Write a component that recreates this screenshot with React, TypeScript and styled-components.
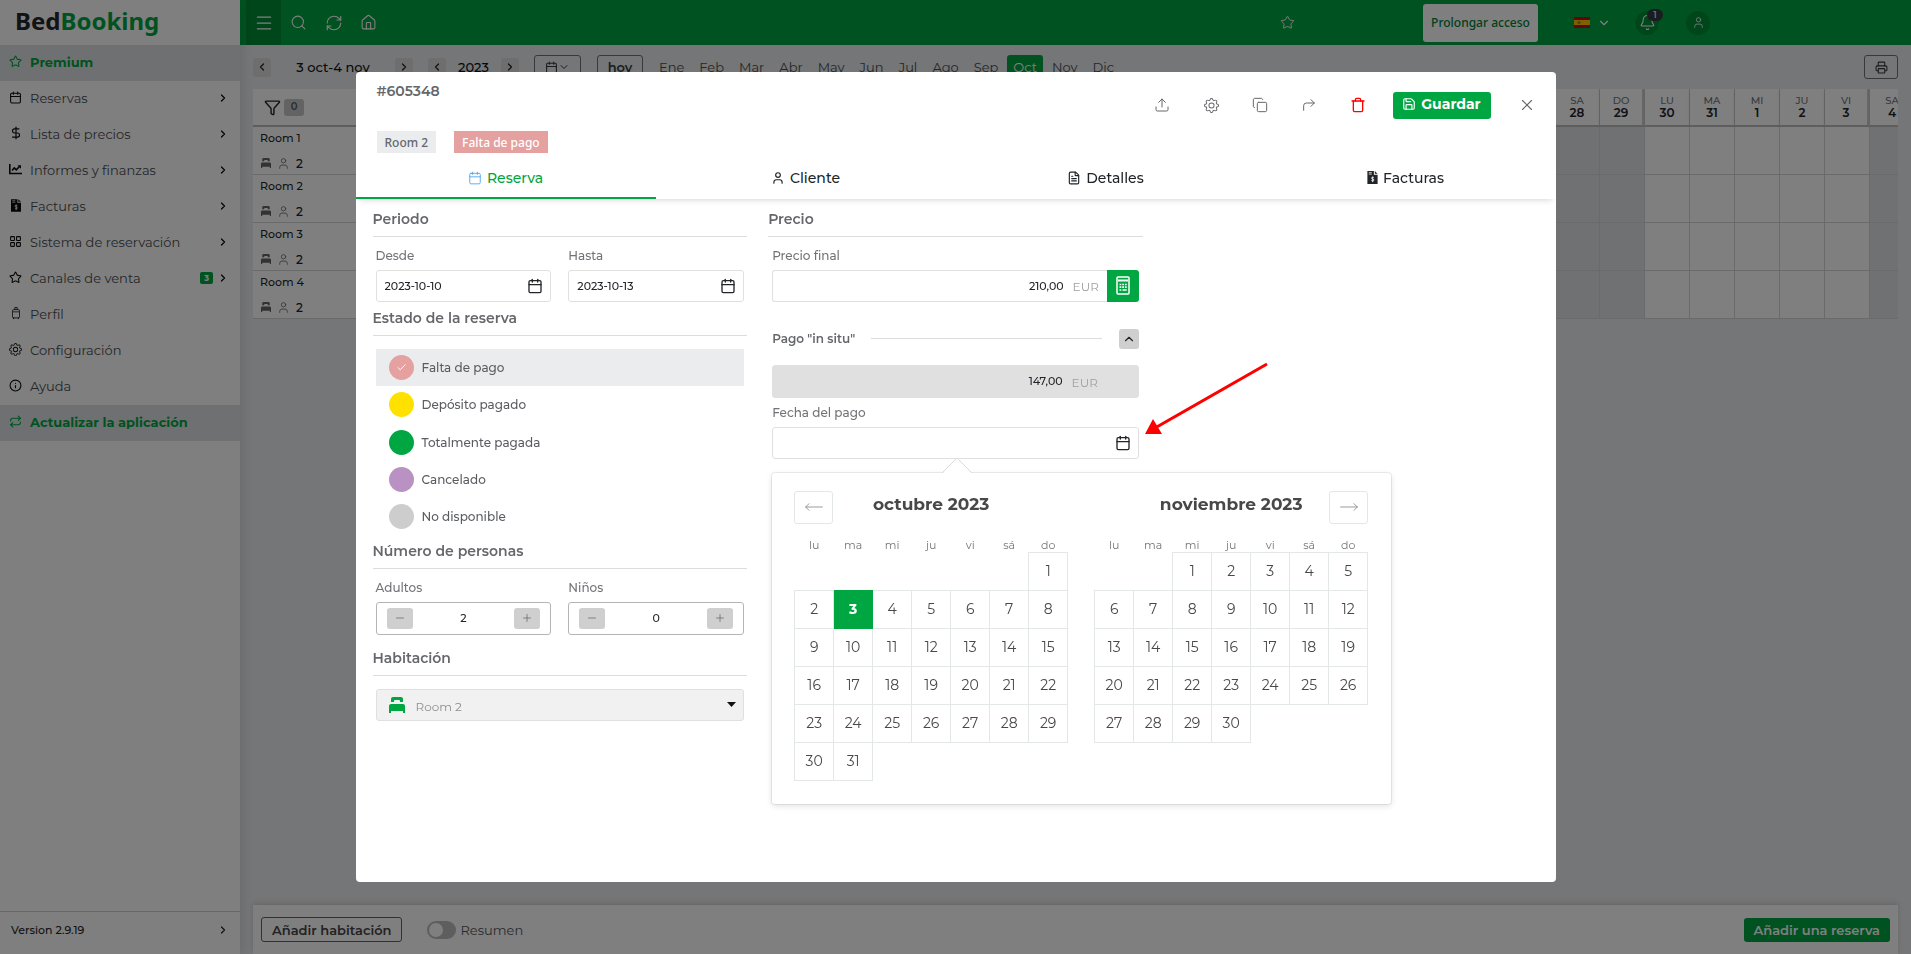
import React from "react";
import styled, { createGlobalStyle, css } from "styled-components";
import {
  Bell, Calendar, ChevronDown, ChevronLeft, ChevronRight, ChevronUp, Copy, CornerUpRight, DollarSign,
  FileText, Funnel, House, Info, LayoutGrid, Menu, Minus, MoveLeft, MoveRight, Plus, Printer, RefreshCw,
  Repeat, Save, Search, Star, Trash, Upload, User, X, Check,
} from "lucide-react";
import { BsGear, BsSuitcase2 } from "react-icons/bs";

const green = "#00a642";
const grey = "#ebecee";
const line = "#e0e0e0";
const sans = `Montserrat, "Open Sans", "Liberation Sans", sans-serif`;
const plain = `"Noto Sans", "Open Sans", sans-serif`;

const Global = createGlobalStyle`
  * { box-sizing: border-box; }
  html, body { margin: 0; height: 100%; }
  body { font-family: ${sans}; font-size: 13px; color: #212529; overflow: hidden; }
  button, input, select { font: inherit; color: inherit; margin: 0; }
  button { padding: 0; border: 0; background: none; cursor: pointer; display: flex; align-items: center; justify-content: center; }
  a { color: inherit; text-decoration: none; }
  svg { flex: none; display: block; }
`;

/* ---------- custom glyphs ---------- */

const BedIcon = ({ w, h, color }: { w: number; h: number; color: string }) => (
  <svg width={w} height={h} viewBox="0 0 16 16" fill={color} aria-hidden>
    <path d="M2 5V2a2 2 0 0 1 2-2h8a2 2 0 0 1 2 2v3h-3V4a1 1 0 0 0-1-1H6a1 1 0 0 0-1 1v1z" />
    <path d="M0 9a2 2 0 0 1 2-2h12a2 2 0 0 1 2 2v7h-2v-2H2v2H0z" />
  </svg>
);

const InvoiceIcon = ({ w, h }: { w: number; h: number }) => (
  <svg width={w} height={h} viewBox="0 0 11 14" aria-hidden>
    <path d="M0 0h7v4h4v10H0z" fill="currentColor" />
    <path d="M8 0l3 3H8z" fill="currentColor" />
    <path d="M1.5 1.8h3.2M1.5 3.4h3.2" stroke="#fff" strokeWidth=".8" />
    <path d="M7 7.2c-.4-.6-2.6-.7-2.6.5 0 1.3 2.7.7 2.7 2 0 1.2-2.3 1.1-2.8.4M5.7 6v6" fill="none" stroke="#fff" strokeWidth=".9" />
  </svg>
);

const ChartIcon = () => (
  <svg width="13" height="11" viewBox="0 0 13 11" fill="none" stroke="currentColor" strokeWidth="1.6" aria-hidden>
    <path d="M.8 0v9.5H13" />
    <path d="M3 6.5l2.3-2.6 2 2 3.4-3.6" />
    <path d="M8.5 1.2H12v3.5z" fill="currentColor" stroke="none" />
  </svg>
);

const CalculatorIcon = () => (
  <svg width="14" height="19" viewBox="0 0 14 19" aria-hidden>
    <rect x="1" y="1" width="12" height="17" rx="1" fill="none" stroke="#fff" strokeWidth="1.5" />
    <path d="M2 4.5h10" stroke="#fff" strokeWidth="2" />
    <path d="M3.5 8.5h7.5M3.5 11.2h7.5" stroke="#fff" strokeWidth="1.7" strokeDasharray="1.8 .9" />
    <path d="M3.5 14h1.8M6.5 14h4.2" stroke="#fff" strokeWidth="1.7" />
  </svg>
);

const Flag = () => (
  <svg width="16" height="11" viewBox="0 0 16 11" aria-hidden>
    <path d="M0 0h16v11H0z" fill="#c60b1e" />
    <path d="M0 3h16v5H0z" fill="#ffc400" />
    <circle cx="5" cy="5.5" r="1.5" fill="#ad7a1a" />
  </svg>
);

/* ---------- shell ---------- */

const Shell = styled.div`display: flex; height: 100vh; background: ${grey};`;

const Sidebar = styled.nav`
  width: 240px; flex: none; display: flex; flex-direction: column; background: #fff;
  box-shadow: 0 0 13px rgba(0, 0, 0, 0.14); z-index: 1;
`;
const Logo = styled.a`
  height: 45px; padding: 0 15px 4px; display: flex; align-items: center;
  font: 700 24px/36px ${plain}; color: #25262b;
  span { color: ${green}; }
`;
const NavItem = styled.a<{ $hot?: boolean }>`
  height: 36px; padding: 0 11px 2px 9px; display: flex; align-items: center; gap: 8px; color: #4c4d50;
  svg { color: #0b0b0b; }
  ${(p) => p.$hot && css`background: #dfe1e5; color: ${green}; font-weight: 700; svg { color: ${green}; }`}
`;
const NavIcon = styled.span`width: 13px; display: flex; justify-content: center; padding-bottom: 2px;`;
const NavLabel = styled.span`flex: 1;`;
const NavBadge = styled.span`
  width: 13px; height: 12px; border-radius: 2px; background: ${green}; color: #fff; margin-right: -4px;
  font: 700 8px/12px ${sans}; text-align: center;
`;
const Version = styled.a`
  margin-top: auto; height: 43px; padding: 0 11px 6px; border-top: 1px solid #cfcfcf; display: flex;
  align-items: center; justify-content: space-between; font-size: 11px; font-weight: 500;
`;

const Main = styled.main`flex: 1; min-width: 0; display: flex; flex-direction: column;`;

const TopBar = styled.header`
  height: 45px; flex: none; padding: 0 201px 0 6px; display: flex; align-items: center; background: ${green}; color: #fff;
`;
const TopButton = styled.button<{ $active?: boolean }>`
  width: 35px; height: 45px; background: ${(p) => (p.$active ? "#008c36" : "none")};
`;
const Spacer = styled.div`flex: 1;`;
const Extend = styled.button`
  width: 115px; height: 38px; margin: 0 36px 0 118px; border-radius: 3px; background: #fff;
  font: 500 12px ${plain}; color: #00803a;
`;
const Lang = styled.button`gap: 7px; margin-right: 24px;`;
const Round = styled.button`position: relative; width: 24px; height: 24px; border-radius: 12px; background: #008c36; margin-right: 27px; &:last-child { margin-right: 0; }`;
const Count = styled.span`
  position: absolute; left: 12px; top: -2px; width: 16px; height: 12px; border-radius: 6px; background: #343a40;
  font: 500 9px/12px ${sans}; text-align: center;
`;

const Toolbar = styled.div`height: 44px; flex: none; padding: 0 13px; display: flex; align-items: center;`;
const Step = styled.button`width: 18px; height: 19px; border-radius: 3px; background: #dcdcdc;`;
const Range = styled.span<{ $w: number }>`width: ${(p) => p.$w}px; text-align: center; color: #111; font-size: 13px; font-weight: 500;`;
const Outlined = styled.button<{ $w: number }>`
  width: ${(p) => p.$w}px; height: 24px; border: 1px solid #6c757d; border-radius: 3px; color: #343a40; font-weight: 600;
`;
const Months = styled.div`display: flex; gap: 3px; margin-left: 10px;`;
const Month = styled.button<{ $on?: boolean }>`
  height: 25px; padding: 0 6px; border-radius: 3px; color: ${(p) => (p.$on ? "#fff" : "#4c4d50")};
  background: ${(p) => (p.$on ? green : "none")};
`;

const Board = styled.div`margin: 0 13px; overflow: hidden; flex: none;`;
const Grid = styled.table`
  border-collapse: separate; border-spacing: 0; table-layout: fixed; width: 1662px;
  th, td { padding: 0; font-weight: 500; }
  thead th { height: 38px; background: #fff; border-bottom: 2px solid #bdbdbd; border-right: 1px solid #cfcfcf; box-shadow: 0 2px 4px rgba(0,0,0,.12); }
  tbody th, tbody td { height: 48px; border-bottom: 1px solid #d3d4d6; }
  tbody th { background: #fff; text-align: left; }
`;
const CornerHead = styled.th`width: 177px;`;
const DayHead = styled.th<{ $edge: boolean }>`
  width: 45px; text-align: center;
  ${(p) => p.$edge && css`border-right: 3px solid #cfd0d2 !important;`}
  small { display: block; font-size: 10px; line-height: 12px; color: #6c757d; }
  b { display: block; font-size: 12px; line-height: 12px; font-weight: 600; }
`;
const DayCell = styled.td<{ $off: boolean }>`background: ${(p) => (p.$off ? "#e0e2e6" : "#fff")}; border-right: 1px solid #d3d4d6;`;
const FilterCell = styled.div`display: flex; align-items: center; gap: 3px; padding-left: 11px;`;
const FilterCount = styled.span`width: 20px; height: 17px; border-radius: 3px; background: #c6c6c6; color: #55595e; font: 600 10px/16px ${sans}; text-align: center;`;
const RoomName = styled.div`padding: 2px 7px 0; font-size: 11px; line-height: 19px;`;
const RoomInfo = styled.div`display: flex; align-items: center; gap: 6px; height: 26px; padding: 4px 8px 0; font-size: 12px; color: #222;`;

const Footer = styled.footer`
  margin: auto 13px 0; height: 49px; padding: 0 8px; display: flex; align-items: center; background: #fff;
  box-shadow: 0 -2px 5px rgba(0, 0, 0, 0.12);
`;
const AddRoom = styled.button`height: 25px; padding: 0 10px; border: 1px solid #5f6368; border-radius: 3px; font-weight: 600; color: #444;`;
const AddBooking = styled.button`height: 24px; padding: 0 10px; border-radius: 3px; background: ${green}; color: #fff; font-weight: 600; margin-left: auto;`;
const Toggle = styled.label`
  display: flex; align-items: center; gap: 4px; margin-left: 25px; color: #55575a;
  input { appearance: none; width: 29px; height: 18px; padding: 2px; border-radius: 9px; background: #bcbcbc; }
  input::before { content: ""; display: block; width: 14px; height: 14px; border-radius: 7px; background: #fff; }
`;

/* ---------- modal ---------- */

const Backdrop = styled.div`
  position: fixed; inset: 0; z-index: 5; background: rgba(0, 0, 0, 0.5); display: flex; align-items: center; justify-content: center;
`;
const Modal = styled.section`
  width: 1200px; max-width: 96vw; height: 85vh; display: flex; flex-direction: column; background: #fff; border-radius: 4px; color: #65676b;
`;
const ModalHead = styled.div`display: flex; justify-content: space-between; height: 59px; padding: 0 17px 0 21px;`;
const Title = styled.h1`margin: 9px 0 0; font-size: 14px; line-height: 20px; font-weight: 600;`;
const Actions = styled.div`display: flex; height: 27px; margin-top: 20px;`;
const Tool = styled.button<{ $red?: boolean }>`width: 49px; color: ${(p) => (p.$red ? "#f00" : "#65676b")};`;
const SaveButton = styled.button`
  gap: 5px; width: 98px; margin: 0 24px 0 10px; padding-bottom: 2px; border-radius: 3px; background: ${green}; color: #fff; font-weight: 700; font-size: 14px;
`;
const Close = styled.button`width: 24px; color: #65676b;`;
const Badges = styled.div`display: flex; gap: 18px; height: 22px; padding: 0 21px; font: 500 12px/24px ${plain};`;
const Tag = styled.span<{ $pink?: boolean }>`
  padding: 0 8px; background: ${(p) => (p.$pink ? "#e5a0a0" : grey)}; color: ${(p) => (p.$pink ? "#fff" : "#65676b")};
`;
const Tabs = styled.div`display: grid; grid-template-columns: repeat(4, 1fr); height: 46px; box-shadow: 0 5px 6px -4px rgba(0, 0, 0, 0.16);`;
const Tab = styled.button<{ $on?: boolean }>`
  gap: 5px; padding-top: 6px; font-size: 14px; font-weight: 500; color: ${(p) => (p.$on ? green : "#212529")};
  border-bottom: 2px solid ${(p) => (p.$on ? green : "transparent")};
`;
const Body = styled.div`flex: 1; display: grid; grid-template-columns: repeat(3, 1fr); column-gap: 21px; align-items: start; padding: 10px 17px 0;`;
const Heading = styled.h2<{ $gap?: number }>`
  margin: ${(p) => p.$gap ?? 0}px 0 0; padding-bottom: 7px; border-bottom: 1px solid #dcdcdc; font-size: 14px; line-height: 20px; font-weight: 600;
`;
const Pair = styled.div`display: grid; grid-template-columns: 1fr 1fr; gap: 17px; margin: 9px 3px 0;`;
const Label = styled.label`display: block; font-size: 12px; line-height: 20px; margin-bottom: 4px; font-weight: 500; color: #717377;`;
const Box = styled.div<{ $dark?: boolean }>`
  display: flex; align-items: center; height: ${(p) => (p.$dark ? 33 : 32)}px; padding: 0 7px 0 8px; border: 1px solid ${(p) => (p.$dark ? "#b5b5b5" : line)};
  border-radius: 3px; color: #212529; font-size: 11px; font-weight: 500;
  input { flex: 1; width: 0; min-width: 0; padding: 0; border: 0; outline: 0; background: none; }
`;
const Statuses = styled.div`display: grid; grid-auto-rows: 1fr; height: 187px; margin: 13px 3px 0;`;
const Status = styled.label<{ $on?: boolean }>`
  display: flex; align-items: center; gap: 8px; padding-left: 13px; font-size: 12px; font-weight: 500; color: #5a5c60;
  background: ${(p) => (p.$on ? grey : "none")};
`;
const Dot = styled.span<{ $c: string }>`
  position: relative; width: 25px; height: 25px; color: #fff;
  input { display: block; appearance: none; width: 25px; height: 25px; border-radius: 50%; background: ${(p) => p.$c}; }
  svg { position: absolute; inset: 7px; }
`;
const Spin = styled.button`width: 26px; height: 21px; border-radius: 3px; background: #cfcfcf; color: #65676b;`;
const Counter = styled(Box)`padding: 0 10px; input { text-align: center; }`;
const SelectBox = styled.div`
  display: flex; align-items: center; height: 32px; margin: 13px 3px 0; padding: 0 7px 0 12px; border: 1px solid ${line}; border-radius: 3px;
  background: #f1f1f1; font-size: 12px;
  select { flex: 1; appearance: none; border: 0; background: none; padding: 3px 11px 0; opacity: 1; color: #8e8e8e; }
`;
const Field = styled.div<{ $top: number }>`position: relative; margin: ${(p) => p.$top}px 4px 0;`;
const PriceRow = styled.div`display: flex; ${Box} { flex: 1; padding-right: 8px; border-right: 0; border-radius: 3px 0 0 3px; } input { text-align: right; }`;
const Unit = styled.span`margin-left: 9px; padding-top: 2px; font-size: 12px; font-weight: 400; color: #a0a0a0;`;
const CalcButton = styled.button`width: 32px; height: 32px; border-radius: 0 3px 3px 0; background: ${green};`;
const OnSite = styled.div`
  display: flex; align-items: center; height: 20px; font-size: 12px; font-weight: 600; color: #65676b;
  hr { flex: 1; margin: 0 17px 0 16px; border: 0; border-top: 1px solid #dcdcdc; }
  button { width: 20px; height: 20px; border-radius: 3px; background: #cfcfcf; color: #212529; }
`;
const Locked = styled(Box)`height: 33px; border-color: #e0e0e0; background: #e0e0e0; padding: 0 40px 0 8px; input { text-align: right; }`;

const Popover = styled.div`
  position: absolute; z-index: 3; top: 70px; left: 0; display: flex; gap: 26px; padding: 18px 23px 23px 22px; background: #fff;
  border-radius: 3px; box-shadow: 0 2px 6px rgba(0, 0, 0, 0.12), 0 0 0 1px rgba(0, 0, 0, 0.07);
`;
const Notch = styled.svg`position: absolute; top: -15px; left: 170px;`;
const Pointer = styled.svg`position: absolute; left: calc(100% + 6px); top: -42px;`;
const MonthHead = styled.div`display: grid; grid-template-columns: 39px 1fr 39px; height: 47px;`;
const MonthTitle = styled.strong`grid-column: 2; font-size: 17px; line-height: 26px; text-align: center; color: #484848;`;
const Arrow = styled.button<{ $col: number }>`grid-column: ${(p) => p.$col}; grid-row: 1; height: 33px; border: 1px solid #e4e7e7; border-radius: 3px; color: #82888a;`;
const Days = styled.table`
  border-collapse: collapse; table-layout: fixed; width: 274px;
  th { padding: 0; height: 14px; font-size: 11px; line-height: 14px; font-weight: 400; color: #757575; }
  td { padding: 0; height: 38px; }
`;
const Day = styled.td<{ $on?: boolean }>`
  border: 1px solid ${(p) => (p.$on ? green : "#e4e7e7")}; background: ${(p) => (p.$on ? green : "none")};
  button { width: 100%; height: 37px; font-size: 14px; font-weight: ${(p) => (p.$on ? 700 : 400)}; color: ${(p) => (p.$on ? "#fff" : "#484848")}; }
`;

/* ---------- data ---------- */

const ic = { size: 13, strokeWidth: 2 };
const menu: { icon: React.ReactNode; text: string; arrow?: boolean; hot?: boolean; badge?: string }[] = [
  { icon: <Star {...ic} />, text: "Premium", hot: true },
  { icon: <Calendar {...ic} />, text: "Reservas", arrow: true },
  { icon: <DollarSign {...ic} size={14} />, text: "Lista de precios", arrow: true },
  { icon: <ChartIcon />, text: "Informes y finanzas", arrow: true },
  { icon: <InvoiceIcon w={10} h={13} />, text: "Facturas", arrow: true },
  { icon: <LayoutGrid {...ic} />, text: "Sistema de reservación", arrow: true },
  { icon: <Star {...ic} />, text: "Canales de venta", arrow: true, badge: "3" },
  { icon: <BsSuitcase2 size={12} />, text: "Perfil" },
  { icon: <BsGear size={13} />, text: "Configuración" },
  { icon: <Info {...ic} />, text: "Ayuda" },
  { icon: <Repeat {...ic} />, text: "Actualizar la aplicación", hot: true },
];
const monthNames = ["Ene", "Feb", "Mar", "Abr", "May", "Jun", "Jul", "Ago", "Sep", "Oct", "Nov", "Dic"];
const weekNames = ["LU", "MA", "MI", "JU", "VI", "SA", "DO"];
const boardDays = Array.from({ length: 33 }, (_, i) => ({ day: i < 29 ? i + 3 : i - 28, week: (i + 1) % 7 }));
const statuses = [
  ["Falta de pago", "#e5a0a0"], ["Depósito pagado", "#ffe100"], ["Totalmente pagada", green], ["Cancelado", "#b991c3"], ["No disponible", "#cdcdcd"],
];

function MonthView({ title, offset, count, selected, dir }: { title: string; offset: number; count: number; selected?: number; dir: "prev" | "next" }) {
  const rows = Array.from({ length: Math.ceil((offset + count) / 7) }, (_, r) => Array.from({ length: 7 }, (_, c) => r * 7 + c - offset + 1));
  return (
    <div>
      <MonthHead>
        <MonthTitle>{title}</MonthTitle>
        <Arrow $col={dir === "prev" ? 1 : 3} aria-label={dir === "prev" ? "Mes anterior" : "Mes siguiente"}>
          {dir === "prev" ? <MoveLeft size={20} strokeWidth={1} /> : <MoveRight size={20} strokeWidth={1} />}
        </Arrow>
      </MonthHead>
      <Days>
        <thead><tr>{["lu", "ma", "mi", "ju", "vi", "sá", "do"].map((d) => <th key={d}>{d}</th>)}</tr></thead>
        <tbody>
          {rows.map((row, r) => (
            <tr key={r}>
              {row.map((d) => (d < 1 || d > count ? <td key={d} /> : <Day key={d} $on={d === selected}><button>{d}</button></Day>))}
            </tr>
          ))}
        </tbody>
      </Days>
    </div>
  );
}

function DateField({ id, label, value }: { id: string; label: string; value: string }) {
  return (
    <div>
      <Label htmlFor={id}>{label}</Label>
      <Box><input id={id} defaultValue={value} /><button aria-label="Abrir calendario"><Calendar size={16} strokeWidth={2} /></button></Box>
    </div>
  );
}

function CounterField({ id, label, value }: { id: string; label: string; value: string }) {
  return (
    <div>
      <Label htmlFor={id}>{label}</Label>
      <Counter $dark>
        <Spin aria-label="Menos"><Minus size={12} strokeWidth={1.5} /></Spin>
        <input id={id} defaultValue={value} />
        <Spin aria-label="Más"><Plus size={12} strokeWidth={1.5} /></Spin>
      </Counter>
    </div>
  );
}

export default function App() {
  return (
    <>
      <Global />
      <Shell>
        <Sidebar>
          <Logo href="#">Bed<span>Booking</span></Logo>
          {menu.map((m) => (
            <NavItem href="#" key={m.text} $hot={m.hot}>
              <NavIcon>{m.icon}</NavIcon>
              <NavLabel>{m.text}</NavLabel>
              {m.badge && <NavBadge>{m.badge}</NavBadge>}
              {m.arrow && <ChevronRight size={12} strokeWidth={2.5} />}
            </NavItem>
          ))}
          <Version href="#">Version 2.9.19<ChevronRight size={12} strokeWidth={2.5} /></Version>
        </Sidebar>

        <Main>
          <TopBar>
            <TopButton $active aria-label="Menú"><Menu size={20} strokeWidth={1.5} /></TopButton>
            <TopButton aria-label="Buscar"><Search size={17} strokeWidth={1.5} /></TopButton>
            <TopButton aria-label="Actualizar"><RefreshCw size={18} strokeWidth={1.5} /></TopButton>
            <TopButton aria-label="Inicio"><House size={17} strokeWidth={1.5} /></TopButton>
            <Spacer />
            <TopButton aria-label="Favoritos"><Star size={15} strokeWidth={1.5} /></TopButton>
            <Extend>Prolongar acceso</Extend>
            <Lang aria-label="Idioma"><Flag /><ChevronDown size={14} /></Lang>
            <Round aria-label="Avisos"><Bell size={17} strokeWidth={1.5} /><Count>1</Count></Round>
            <Round aria-label="Cuenta"><User size={13} strokeWidth={1.5} /></Round>
          </TopBar>

          <Toolbar>
            <Step aria-label="Anterior"><ChevronLeft size={12} strokeWidth={2.5} /></Step>
            <Range $w={124}>3 oct-4 nov</Range>
            <Step aria-label="Siguiente"><ChevronRight size={12} strokeWidth={2.5} /></Step>
            <Range $w={15} />
            <Step aria-label="Año anterior"><ChevronLeft size={12} strokeWidth={2.5} /></Step>
            <Range $w={55}>2023</Range>
            <Step aria-label="Año siguiente"><ChevronRight size={12} strokeWidth={2.5} /></Step>
            <Range $w={15} />
            <Outlined $w={47} aria-label="Elegir fecha"><Calendar size={13} /><ChevronDown size={12} /></Outlined>
            <Range $w={16} />
            <Outlined $w={46}>hoy</Outlined>
            <Months>{monthNames.map((m) => <Month key={m} $on={m === "Oct"}>{m}</Month>)}</Months>
            <Spacer />
            <Outlined $w={34} aria-label="Imprimir"><Printer size={13} /></Outlined>
          </Toolbar>

          <Board>
            <Grid>
              <thead>
                <tr>
                  <CornerHead><FilterCell><Funnel size={17} strokeWidth={2} /><FilterCount>0</FilterCount></FilterCell></CornerHead>
                  {boardDays.map((d) => (
                    <DayHead key={`${d.day}-${d.week}`} $edge={d.week === 6 || d.week === 4}><small>{weekNames[d.week]}</small><b>{d.day}</b></DayHead>
                  ))}
                </tr>
              </thead>
              <tbody>
                {["Room 1", "Room 2", "Room 3", "Room 4"].map((r) => (
                  <tr key={r}>
                    <th>
                      <RoomName>{r}</RoomName>
                      <RoomInfo><BedIcon w={10} h={10} color="#666" /><User size={13} strokeWidth={1.5} color="#666" />2</RoomInfo>
                    </th>
                    {boardDays.map((d) => <DayCell key={`${d.day}-${d.week}`} $off={d.week > 4} />)}
                  </tr>
                ))}
              </tbody>
            </Grid>
          </Board>

          <Footer>
            <AddRoom>Añadir habitación</AddRoom>
            <Toggle><input type="checkbox" />Resumen</Toggle>
            <AddBooking>Añadir una reserva</AddBooking>
          </Footer>
        </Main>
      </Shell>

      <Backdrop>
        <Modal role="dialog" aria-label="Reserva #605348">
          <ModalHead>
            <Title>#605348</Title>
            <Actions>
              <Tool aria-label="Exportar"><Upload size={16} strokeWidth={1.5} /></Tool>
              <Tool aria-label="Ajustes"><BsGear size={15} /></Tool>
              <Tool aria-label="Copiar"><Copy size={16} strokeWidth={1.5} /></Tool>
              <Tool aria-label="Compartir"><CornerUpRight size={16} strokeWidth={1.5} /></Tool>
              <Tool $red aria-label="Eliminar"><Trash size={16} strokeWidth={2} /></Tool>
              <SaveButton><Save size={14} strokeWidth={2} />Guardar</SaveButton>
              <Close aria-label="Cerrar"><X size={18} strokeWidth={1.5} /></Close>
            </Actions>
          </ModalHead>
          <Badges><Tag>Room 2</Tag><Tag $pink>Falta de pago</Tag></Badges>
          <Tabs>
            <Tab $on><Calendar size={14} strokeWidth={1.5} color="#4aa3ee" />Reserva</Tab>
            <Tab><User size={14} />Cliente</Tab>
            <Tab><FileText size={14} />Detalles</Tab>
            <Tab><InvoiceIcon w={11} h={13} />Facturas</Tab>
          </Tabs>

          <Body>
            <div>
              <Heading>Periodo</Heading>
              <Pair>
                <DateField id="from" label="Desde" value="2023-10-10" />
                <DateField id="to" label="Hasta" value="2023-10-13" />
              </Pair>
              <Heading $gap={6}>Estado de la reserva</Heading>
              <Statuses>
                {statuses.map(([name, color], i) => (
                  <Status key={name} $on={i === 0}>
                    <Dot $c={color}><input type="radio" name="status" defaultChecked={i === 0} />{i === 0 && <Check size={11} strokeWidth={2} />}</Dot>
                    {name}
                  </Status>
                ))}
              </Statuses>
              <Heading $gap={5}>Número de personas</Heading>
              <Pair>
                <CounterField id="adults" label="Adultos" value="2" />
                <CounterField id="children" label="Niños" value="0" />
              </Pair>
              <Heading $gap={13}>Habitación</Heading>
              <SelectBox>
                <BedIcon w={16} h={16} color={green} />
                <select aria-label="Habitación" disabled><option>Room 2</option></select>
                <svg width="9" height="5" viewBox="0 0 9 5" aria-hidden><path d="M0 0h9L4.500 5z" fill="#111" /></svg>
              </SelectBox>
            </div>

            <div>
              <Heading>Precio</Heading>
              <Field $top={9}>
                <Label htmlFor="price">Precio final</Label>
                <PriceRow>
                  <Box><input id="price" defaultValue="210,00" /><Unit>EUR</Unit></Box>
                  <CalcButton aria-label="Calcular"><CalculatorIcon /></CalcButton>
                </PriceRow>
              </Field>
              <Field $top={27}>
                <OnSite>Pago "in situ"<hr /><button aria-label="Contraer"><ChevronUp size={14} /></button></OnSite>
              </Field>
              <Field $top={16}>
                <Locked><input aria-label="Pago in situ" readOnly value="147,00" /><Unit>EUR</Unit></Locked>
              </Field>
              <Field $top={5}>
                <DateField id="paid" label="Fecha del pago" value="" />
                <Pointer width="126" height="76" viewBox="0 0 126 76" aria-hidden>
                  <path d="M122 3L10 67" stroke="#f00" strokeWidth="3" />
                  <path d="M0 73L8 58l9 15z" fill="#f00" />
                </Pointer>
                <Popover>
                  <Notch width="30" height="16" viewBox="0 0 30 16" aria-hidden>
                    <path d="M0 16L15 1l15 15z" fill="#fff" />
                    <path d="M0 15L15 0l15 15" fill="none" stroke="#dbdbdb" />
                  </Notch>
                  <MonthView title="octubre 2023" offset={6} count={31} selected={3} dir="prev" />
                  <MonthView title="noviembre 2023" offset={2} count={30} dir="next" />
                </Popover>
              </Field>
            </div>
          </Body>
        </Modal>
      </Backdrop>
    </>
  );
}
